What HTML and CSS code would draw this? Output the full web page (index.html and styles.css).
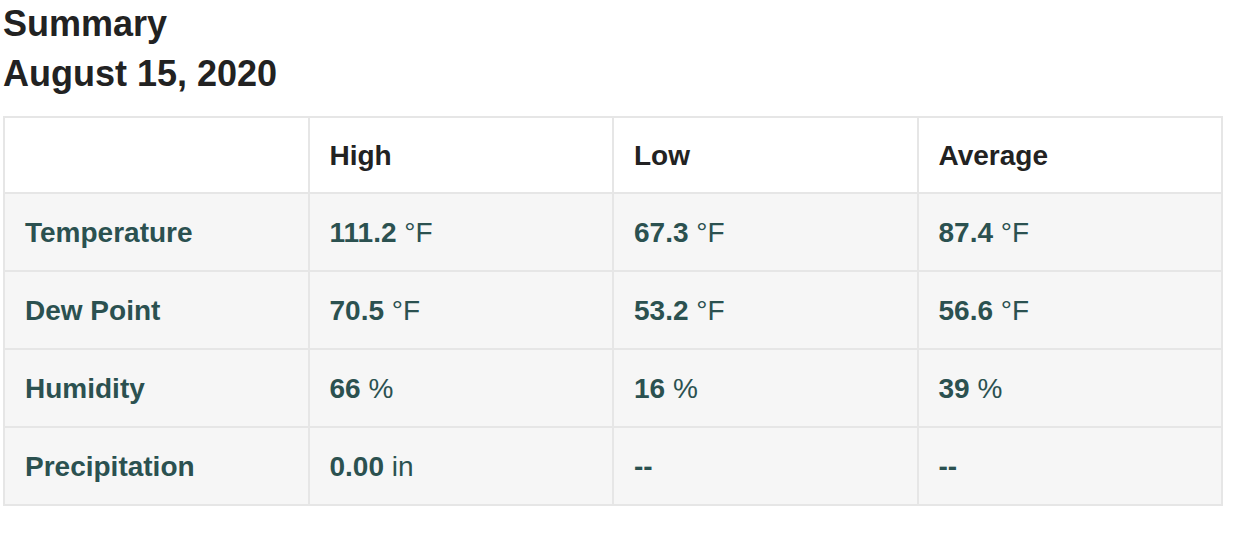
FILE: index.html
```html
<!DOCTYPE html>
<html>
<head>
<meta charset="utf-8">
<link rel="stylesheet" href="styles.css">
</head>
<body>
<h2 class="title">Summary<br>August 15, 2020</h2>
<table class="summary">
  <thead>
    <tr><th></th><th>High</th><th>Low</th><th>Average</th></tr>
  </thead>
  <tbody>
    <tr><th>Temperature</th><td><b>111.2</b> °F</td><td><b>67.3</b> °F</td><td><b>87.4</b> °F</td></tr>
    <tr><th>Dew Point</th><td><b>70.5</b> °F</td><td><b>53.2</b> °F</td><td><b>56.6</b> °F</td></tr>
    <tr><th>Humidity</th><td><b>66</b> %</td><td><b>16</b> %</td><td><b>39</b> %</td></tr>
    <tr><th>Precipitation</th><td><b>0.00</b> in</td><td><b>--</b></td><td><b>--</b></td></tr>
  </tbody>
</table>
</body>
</html>
```
FILE: styles.css
```css
html, body {
  margin: 0;
  background: #fff;
}
body {
  padding: 0 3px;
  font-family: "Liberation Sans", Arial, sans-serif;
  color: #222;
}
.title {
  margin: -1px 0 17px;
  font-size: 36px;
  line-height: 50px;
  font-weight: bold;
  color: #222;
}
.summary {
  width: 1220px;
  border-collapse: collapse;
  table-layout: fixed;
  font-size: 28px;
  line-height: 38px;
}
.summary th, .summary td {
  border: 2px solid #e6e6e6;
  padding: 20px 20px 18px;
  text-align: left;
}
.summary thead th {
  background: #fff;
  color: #222;
  font-weight: bold;
  padding: 19px 20px 17px;
}
.summary tbody tr {
  background: #f6f6f6;
}
.summary tbody th {
  font-weight: bold;
  color: #2b5150;
}
.summary tbody td {
  color: #2b5150;
  font-weight: normal;
}
.summary b {
  font-weight: bold;
}
```
